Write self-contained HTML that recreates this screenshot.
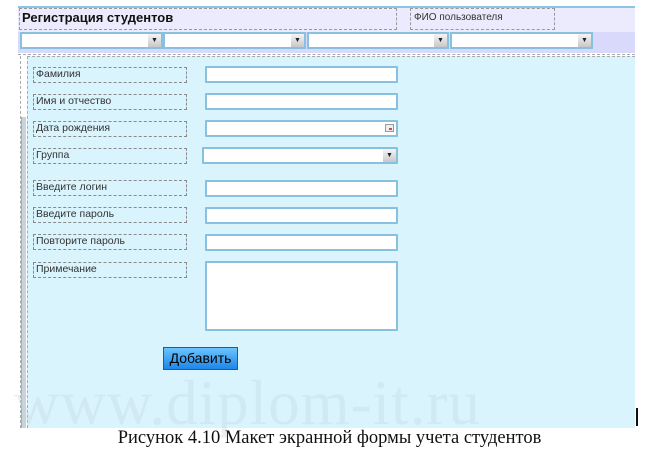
<!DOCTYPE html>
<html><head><meta charset="utf-8"><style>
body{margin:0;width:659px;height:460px;background:#fff;position:relative;overflow:hidden;font-family:"Liberation Sans",sans-serif}
div{position:absolute;box-sizing:border-box}
.lbl{left:33px;width:154px;height:16px;border:1px dashed #8a8a8a;font-size:10.5px;color:#333;padding:0 0 0 2px;line-height:12px}
.in{left:205px;width:193px;height:17px;border:2px solid #88c0e0;background:#fff;border-radius:1px}
.dd{top:32px;height:17px;border:2px solid #88c0e0;background:#fff}
.ar{right:0;top:0;width:13px;height:13px;background:linear-gradient(#f4f4f4,#c8c8c8);font-size:7px;text-align:center;line-height:13px;color:#222}
</style></head><body>
<div style="left:18px;top:6px;width:617px;height:2px;background:#8cc4e4"></div>
<div style="left:18px;top:8px;width:617px;height:24px;background:#ebebfd"></div>
<div style="left:19px;top:8px;width:378px;height:22px;border:1px dashed #999"></div>
<div style="left:22px;top:10px;font-size:13px;font-weight:bold;color:#111">Регистрация студентов</div>
<div style="left:410px;top:8px;width:145px;height:22px;border:1px dashed #999;font-size:10px;color:#333;padding:3px 0 0 3px">ФИО пользователя</div>
<div style="left:18px;top:32px;width:617px;height:21px;background:#d9d9fb"></div>
<div class="dd" style="left:20px;width:143px"><div class="ar">▼</div></div>
<div class="dd" style="left:163px;width:143px"><div class="ar">▼</div></div>
<div class="dd" style="left:307px;width:142px"><div class="ar">▼</div></div>
<div class="dd" style="left:450px;width:143px"><div class="ar">▼</div></div>
<div style="left:18px;top:54px;width:617px;height:1px;border-top:1px dashed #aaa"></div>
<div style="left:27px;top:56px;width:608px;height:372px;background:#d9f4fd;border-left:1px dashed #aaa;border-top:1px dashed #aaa"></div>
<div style="left:20px;top:56px;width:1px;height:372px;border-left:1px dashed #aaa"></div>
<div style="left:21px;top:117px;width:5px;height:311px;background:#c8d4dc;border-left:1px solid #8cb4d4"></div>
<div style="left:14px;top:368px;font-family:'Liberation Serif',serif;font-size:63px;line-height:70px;color:rgba(195,212,222,0.35);letter-spacing:1px;white-space:nowrap">www.diplom-it.ru</div>
<div style="left:636px;top:408px;width:2px;height:18px;background:#111"></div>
<div class="lbl" style="top:67px">Фамилия</div>
<div class="lbl" style="top:94px">Имя и отчество</div>
<div class="lbl" style="top:121px">Дата рождения</div>
<div class="lbl" style="top:148px">Группа</div>
<div class="lbl" style="top:180px">Введите логин</div>
<div class="lbl" style="top:207px">Введите пароль</div>
<div class="lbl" style="top:234px">Повторите пароль</div>
<div class="lbl" style="top:262px">Примечание</div>
<div class="in" style="top:66px"></div>
<div class="in" style="top:93px"></div>
<div class="in" style="top:120px"><div style="right:2px;top:2px;width:9px;height:8px;border:1px solid #999;background:#eee"><div style="left:3px;top:3px;width:3px;height:2px;background:#d44"></div></div></div>
<div class="in" style="left:202px;width:196px;top:147px;"><div class="ar">▼</div></div>
<div class="in" style="top:180px"></div>
<div class="in" style="top:207px"></div>
<div class="in" style="top:234px"></div>
<div class="in" style="top:261px;height:70px"></div>
<div style="left:163px;top:347px;width:75px;height:23px;background:linear-gradient(#6cc4fc,#1e86ea);border:1px solid #1a5ca8;font-size:14px;color:#000;text-align:center;line-height:21px">Добавить</div>
<div style="left:0;top:428px;width:659px;text-align:center;font-family:'Liberation Serif',serif;font-size:18.5px;color:#111;white-space:nowrap">Рисунок 4.10 Макет экранной формы учета студентов</div>
</body></html>
